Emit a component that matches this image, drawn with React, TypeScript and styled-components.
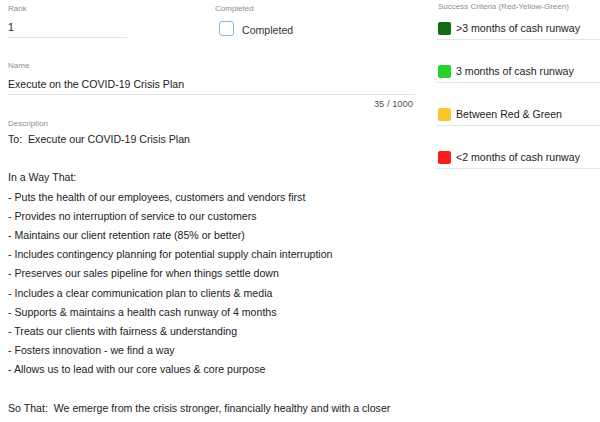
import React from "react";
import styled, { createGlobalStyle } from "styled-components";

const Global = createGlobalStyle`
  html, body { margin: 0; padding: 0; background: #fff; }
  body { font-family: "Liberation Sans", Arial, Helvetica, sans-serif; color: #333; overflow: hidden; }
`;

const Page = styled.div`
  display: flex;
  width: 600px;
  height: 422px;
  overflow: hidden;
`;

const Left = styled.div`
  width: 407px;
  padding-left: 8px;
  display: flex;
  flex-direction: column;
`;

const Right = styled.div`
  margin-left: 22px;
  width: 163px;
  display: flex;
  flex-direction: column;
`;

const TopRow = styled.div`
  display: flex;
  height: 57px;
`;

const Field = styled.div<{ $w?: number; $ml?: number }>`
  display: flex;
  flex-direction: column;
  width: ${(p) => (p.$w ? `${p.$w}px` : "auto")};
  margin-left: ${(p) => p.$ml ?? 0}px;
`;

const Label = styled.div`
  font-size: 8px;
  line-height: 10px;
  color: #8e8e8e;
  margin-top: 4px;
`;

const Value = styled.div<{ $line?: boolean }>`
  font-size: 10.6px;
  line-height: 14px;
  color: #222;
  padding: 6px 0 3px;
  border-bottom: ${(p) => (p.$line ? "1px solid #e4e4e4" : "none")};
`;

const CheckRow = styled.label`
  display: flex;
  align-items: center;
  gap: 8px;
  margin-top: 6px;
  margin-left: 4px;
  font-size: 10.6px;
  color: #333;
`;

const Box = styled.span`
  width: 13px;
  height: 13px;
  border: 1px solid #82b6ea;
  border-radius: 3px;
  background: #fff;
  flex: none;
`;

const CheckText = styled.span`
  padding-top: 4px;
`;

const Counter = styled.div`
  text-align: right;
  font-size: 9.4px;
  line-height: 12px;
  color: #555;
  padding-right: 2px;
  margin-top: 3px;
`;

const DescLabel = styled(Label)`
  margin-top: 9px;
`;

const Desc = styled.div`
  margin-top: 1px;
  font-size: 10.6px;
  line-height: 19.2px;
  color: #222;
`;

const Line = styled.div`
  white-space: pre;
  min-height: 19.2px;
`;

const CritLabel = styled.div`
  font-size: 8px;
  line-height: 10px;
  color: #8e8e8e;
  margin-top: 2px;
  padding-left: 1px;
`;

const CritRow = styled.div`
  display: flex;
  align-items: center;
  gap: 5px;
  height: 16px;
  padding: 8px 0 3px 1px;
  border-bottom: 1px solid #e4e4e4;
  font-size: 10.6px;
  color: #222;
  & + & {
    padding-top: 23px;
  }
`;

const Swatch = styled.span<{ $c: string }>`
  width: 13px;
  height: 13px;
  border-radius: 2px;
  background: ${(p) => p.$c};
  flex: none;
`;

const lines = [
  "To:  Execute our COVID-19 Crisis Plan",
  "",
  "In a Way That:",
  "- Puts the health of our employees, customers and vendors first",
  "- Provides no interruption of service to our customers",
  "- Maintains our client retention rate (85% or better)",
  "- Includes contingency planning for potential supply chain interruption",
  "- Preserves our sales pipeline for when things settle down",
  "- Includes a clear communication plan to clients & media",
  "- Supports & maintains a health cash runway of 4 months",
  "- Treats our clients with fairness & understanding",
  "- Fosters innovation - we find a way",
  "- Allows us to lead with our core values & core purpose",
  "",
  "So That:  We emerge from the crisis stronger, financially healthy and with a closer",
];

const criteria = [
  { c: "#116b12", t: ">3 months of cash runway" },
  { c: "#26d12d", t: "3 months of cash runway" },
  { c: "#fcc62b", t: "Between Red & Green" },
  { c: "#f91d1d", t: "<2 months of cash runway" },
];

export default function App() {
  return (
    <Page>
      <Global />
      <Left>
        <TopRow>
          <Field $w={119}>
            <Label>Rank</Label>
            <Value $line>1</Value>
          </Field>
          <Field $ml={88}>
            <Label>Completed</Label>
            <CheckRow>
              <Box />
              <CheckText>Completed</CheckText>
            </CheckRow>
          </Field>
        </TopRow>
        <Field>
          <Label>Name</Label>
          <Value $line>Execute on the COVID-19 Crisis Plan</Value>
        </Field>
        <Counter>35 / 1000</Counter>
        <DescLabel>Description</DescLabel>
        <Desc>
          {lines.map((l, i) => (
            <Line key={i}>{l}</Line>
          ))}
        </Desc>
      </Left>
      <Right>
        <CritLabel>Success Criteria (Red-Yellow-Green)</CritLabel>
        {criteria.map((c) => (
          <CritRow key={c.t}>
            <Swatch $c={c.c} />
            {c.t}
          </CritRow>
        ))}
      </Right>
    </Page>
  );
}
